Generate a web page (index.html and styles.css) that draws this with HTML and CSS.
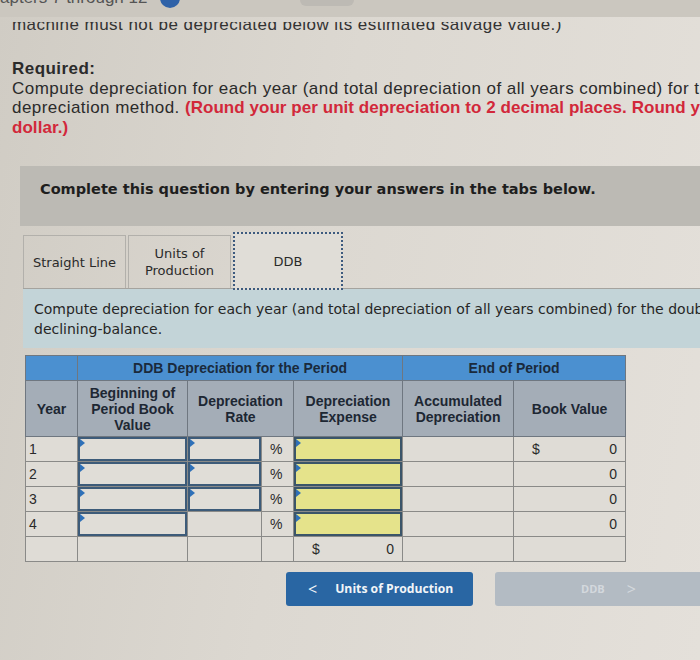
FILE: index.html
```html
<!DOCTYPE html>
<html>
<head>
<meta charset="utf-8">
<link rel="stylesheet" href="styles.css">
</head>
<body>
<div class="page">
  <div class="topbar">
    <span class="crumb">apters 7 through 12</span>
    <span class="dot"></span>
    <span class="pill"></span>
  </div>
  <div class="clipline"><p>machine must not be depreciated below its estimated salvage value.)</p></div>

  <section class="required">
    <h2>Required:</h2>
    <p>Compute depreciation for each year (and total depreciation of all years combined) for the<br>depreciation method. <strong class="red">(Round your per unit depreciation to 2 decimal places. Round your answers to the nearest</strong><br><strong class="red">dollar.)</strong></p>
  </section>

  <div class="instr">Complete this question by entering your answers in the tabs below.</div>

  <div class="tabs">
    <div class="tab">Straight Line</div>
    <div class="tab">Units of<br>Production</div>
    <div class="tab active">DDB</div>
  </div>

  <div class="prompt">Compute depreciation for each year (and total depreciation of all years combined) for the double-<br>declining-balance.</div>

  <table class="grid">
    <colgroup>
      <col class="c-year"><col class="c-beg"><col class="c-rate"><col class="c-pct"><col class="c-exp"><col class="c-acc"><col class="c-book">
    </colgroup>
    <thead>
      <tr class="h1">
        <th></th>
        <th colspan="4">DDB Depreciation for the Period</th>
        <th colspan="2">End of Period</th>
      </tr>
      <tr class="h2">
        <th>Year</th>
        <th>Beginning of<br>Period Book<br>Value</th>
        <th colspan="2">Depreciation<br>Rate</th>
        <th>Depreciation<br>Expense</th>
        <th>Accumulated<br>Depreciation</th>
        <th>Book Value</th>
      </tr>
    </thead>
    <tbody>
      <tr>
        <td class="yr">1</td>
        <td class="in"><div class="box"></div></td>
        <td class="in"><div class="box"></div></td>
        <td class="pct">%</td>
        <td class="in"><div class="box yellow"></div></td>
        <td></td>
        <td class="num"><span class="cur">$</span><span class="val">0</span></td>
      </tr>
      <tr>
        <td class="yr">2</td>
        <td class="in"><div class="box"></div></td>
        <td class="in"><div class="box"></div></td>
        <td class="pct">%</td>
        <td class="in"><div class="box yellow"></div></td>
        <td></td>
        <td class="num"><span class="val">0</span></td>
      </tr>
      <tr>
        <td class="yr">3</td>
        <td class="in"><div class="box"></div></td>
        <td class="in"><div class="box"></div></td>
        <td class="pct">%</td>
        <td class="in"><div class="box yellow"></div></td>
        <td></td>
        <td class="num"><span class="val">0</span></td>
      </tr>
      <tr>
        <td class="yr">4</td>
        <td class="in"><div class="box"></div></td>
        <td></td>
        <td class="pct">%</td>
        <td class="in"><div class="box yellow"></div></td>
        <td></td>
        <td class="num"><span class="val">0</span></td>
      </tr>
      <tr class="total">
        <td></td>
        <td></td>
        <td></td>
        <td></td>
        <td class="num"><span class="cur">$</span><span class="val">0</span></td>
        <td></td>
        <td></td>
      </tr>
    </tbody>
  </table>

  <div class="nav">
    <button class="btn prev"><span class="chev">&lt;</span>Units of Production</button>
    <button class="btn next" disabled>DDB<span class="chev">&gt;</span></button>
  </div>
</div>
</body>
</html>
```
FILE: styles.css
```css
html, body {
  margin: 0;
  padding: 0;
  overflow: hidden;
}
body {
  width: 700px;
  height: 660px;
  background: linear-gradient(100deg, #d0ccc4 0%, #dcd8d1 45%, #e4e0da 100%);
  color: #2b2b2b;
}
.page {
  width: 800px;
}
.topbar {
  height: 17px;
  position: relative;
  overflow: hidden;
  background: #cbc7bf;
}
.crumb {
  display: block;
  margin: -11px 0 0 0;
  font: 17px/18px "Liberation Sans", Arial, sans-serif;
  color: #555;
}
.dot {
  position: absolute;
  left: 160px;
  top: -12px;
  width: 20px;
  height: 20px;
  border-radius: 50%;
  background: #2f62a8;
}
.pill {
  position: absolute;
  left: 300px;
  top: -8px;
  width: 54px;
  height: 14px;
  border-radius: 6px;
  background: #bdbab4;
}
.clipline {
  height: 12px;
  margin-top: 5px;
  overflow: hidden;
}
.clipline p {
  margin: -7px 0 0 12px;
  font: 17px/20px "Liberation Sans", Arial, sans-serif;
  letter-spacing: 0.45px;
  color: #333;
  white-space: nowrap;
}
.required {
  margin: 25px 0 0 12px;
  font-family: "Liberation Sans", Arial, sans-serif;
  font-size: 17px;
  line-height: 19.5px;
  letter-spacing: 0.45px;
  color: #2b2b2b;
}
.required h2 {
  margin: 0;
  font-size: 17px;
  line-height: 19.5px;
  font-weight: 700;
}
.required p {
  margin: 0;
  white-space: nowrap;
}
.red {
  color: #d2283a;
  font-weight: 700;
  letter-spacing: 0.05px;
}
.instr {
  margin: 29px 0 0 20px;
  height: 60px;
  box-sizing: border-box;
  padding: 13px 0 0 20px;
  background: #bcbab4;
  font: bold 14.5px/20px "DejaVu Sans", sans-serif;
  color: #1e1e1e;
}
.tabs {
  display: flex;
  align-items: flex-end;
  gap: 2px;
  margin: 6px 0 0 23px;
  height: 56px;
  border-bottom: 1px solid #a5a39e;
}
.tab {
  box-sizing: border-box;
  height: 53px;
  width: 103px;
  border: 1px solid #b2b0ab;
  border-bottom: none;
  display: flex;
  align-items: center;
  justify-content: center;
  text-align: center;
  font: 13px/17px "DejaVu Sans", sans-serif;
  color: #2a2a2a;
}
.tab.active {
  width: 110px;
  height: 58px;
  margin-bottom: -2px;
  border: 2px dotted #3d5a7e;
  background: #e0ddd7;
}
.prompt {
  margin-left: 23px;
  height: 59px;
  box-sizing: border-box;
  padding: 10px 0 0 11px;
  background: #c3d4d8;
  font: 14px/20px "DejaVu Sans", sans-serif;
  color: #262626;
  white-space: nowrap;
}
.grid {
  margin: 7px 0 0 25px;
  border-collapse: collapse;
  table-layout: fixed;
  width: 600px;
  font-family: "Liberation Sans", Arial, sans-serif;
  border: 1px solid #6e6e6e;
}
.c-year { width: 52px; }
.c-beg { width: 110px; }
.c-rate { width: 74px; }
.c-pct { width: 32px; }
.c-exp { width: 109px; }
.c-acc { width: 111px; }
.c-book { width: 112px; }
.grid th {
  border: 1px solid #6f7780;
  font-weight: bold;
  font-size: 14px;
  line-height: 16px;
  color: #1d2733;
  padding: 0;
}
.grid .h1 th {
  height: 24px;
  background: #4b90d0;
  color: #1a2a3c;
}
.grid .h2 th {
  height: 55px;
  background: #a4adb7;
}
.grid td {
  height: 24px;
  border: 1px solid #8a8a88;
  padding: 0;
  font-size: 14px;
  color: #2a2a2a;
  background: #dfdcd6;
}
.grid td.yr {
  padding-left: 3px;
}
.grid td.pct {
  padding-left: 8px;
}
.grid td.in {
  padding: 0;
  position: relative;
}
.box {
  box-sizing: border-box;
  height: 24px;
  border: 2px solid #3d5b79;
  background: #e0ddd7;
}
.box.yellow {
  background: #e5e38b;
  border-color: #3b5569;
}
.grid td.in::before {
  content: "";
  position: absolute;
  left: 2px;
  top: 2px;
  width: 0;
  height: 0;
  border-top: 4px solid transparent;
  border-bottom: 4px solid transparent;
  border-left: 5px solid #2f70b8;
}
.grid td.num {
  padding: 0 8px 0 18px;
}
.grid td.num .cur {
  float: left;
}
.grid td.num .val {
  float: right;
}
.nav {
  display: flex;
  margin: 10px 0 0 286px;
  gap: 22px;
}
.btn {
  height: 34px;
  border: none;
  border-radius: 3px;
  font: bold 12.2px/34px "Open Sans", "DejaVu Sans", sans-serif;
  display: flex;
  align-items: center;
  padding: 0;
}
.btn.prev {
  width: 187px;
  background: #2966a3;
  color: #f2f5f8;
  justify-content: flex-start;
  padding-left: 22px;
  box-sizing: border-box;
}
.btn.prev .chev {
  font-weight: normal;
  font-size: 16px;
  margin-right: 18px;
}
.btn.next {
  width: 240px;
  background: #b3bbc3;
  color: #d3d8dd;
  padding-left: 86px;
  box-sizing: border-box;
  font-size: 11px;
}
.btn.next .chev {
  font-weight: normal;
  font-size: 16px;
  margin-left: 22px;
}
```
